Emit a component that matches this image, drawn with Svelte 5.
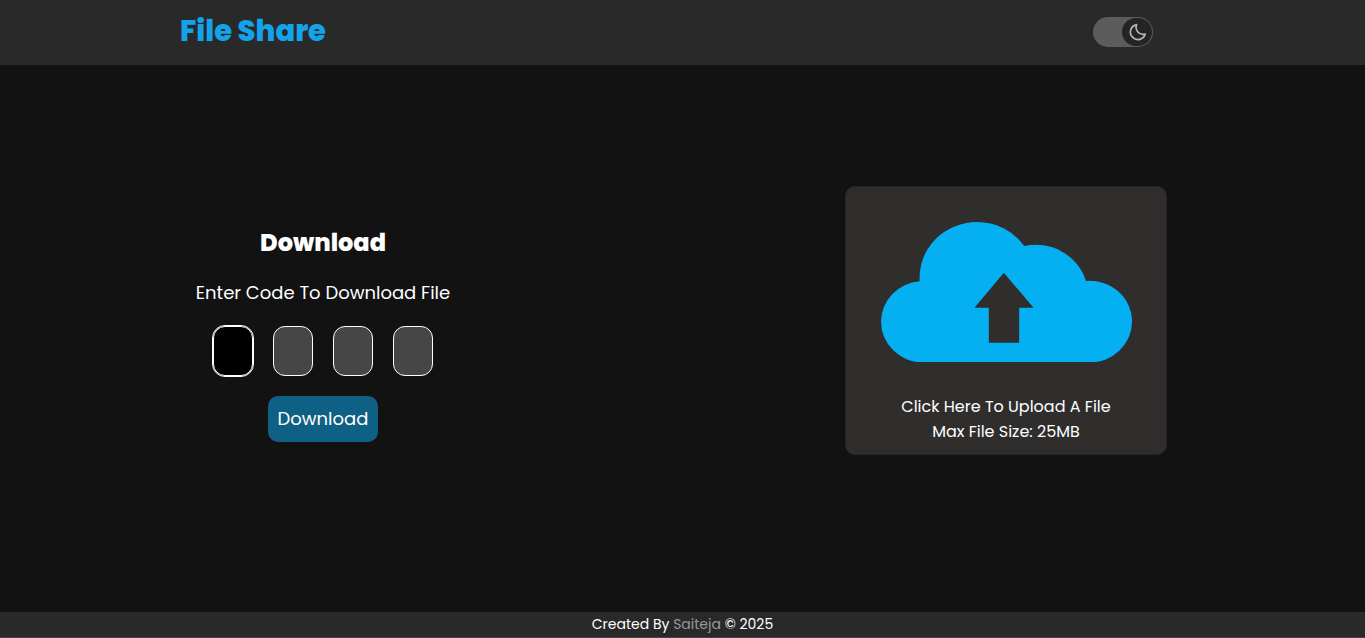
<script>
  let code = $state(['', '', '', '']);
  let dark = $state(true);
</script>

<div class="page">
  <header>
    <h1>File Share</h1>
    <label class="switch">
      <input type="checkbox" bind:checked={dark} aria-label="Dark mode" />
      <span class="knob">
        <svg viewBox="0 0 24 24" width="20" height="20" aria-hidden="true">
          <path d="M11.500 3.200C9.300 8.900 13.600 16.500 21.800 14.600C19.800 20.600 13.200 22.800 8.200 19.500C1.500 15 3.200 5.200 11.500 3.200Z" />
        </svg>
      </span>
    </label>
  </header>

  <main>
    <form class="download" onsubmit={(e) => e.preventDefault()}>
      <h2>Download</h2>
      <p id="hint">Enter Code To Download File</p>
      <div class="code" role="group" aria-labelledby="hint">
        {#each code as _, i}
          <input class:active={i === 0} type="text" inputmode="numeric" maxlength="1" aria-label={`Digit ${i + 1}`} bind:value={code[i]} />
        {/each}
      </div>
      <button class="submit" type="submit">Download</button>
    </form>

    <button class="upload" type="button">
      <svg viewBox="123 124 752 422" aria-hidden="true">
        <path fill-rule="evenodd" d="M250 545A127 122 0 0 1 123 423A127 122 0 0 1 239 301.500A172 166 0 0 1 410 124A172 166 0 0 1 552 196A157 153 0 0 1 737 300.500A127 122 0 0 1 875 423A127 122 0 0 1 748 545ZM491 276L403 381H446V486H537V381H580Z" />
      </svg>
      <span>Click Here To Upload A File</span>
      <span>Max File Size: 25MB</span>
    </button>
  </main>

  <footer>Created By <a href="#saiteja">Saiteja</a> © 2025</footer>
</div>

<style>
  :global(body) {
    margin: 0;
    background: #121212;
  }
  .page {
    min-height: 100vh;
    display: flex;
    flex-direction: column;
    color: #fff;
    font-family: Poppins, Inter, sans-serif;
    box-sizing: border-box;
    border-bottom: 1px solid #444;
  }
  header {
    display: flex;
    align-items: center;
    justify-content: space-between;
    height: 65px;
    padding: 0 212px 4px 180px;
    box-sizing: border-box;
    background: #292929;
  }
  h1 {
    margin: 0;
    font-size: 29px;
    line-height: 40px;
    font-weight: 800;
    color: #12a3eb;
  }
  .switch {
    position: relative;
    display: flex;
    justify-content: flex-end;
    align-items: center;
    width: 60px;
    height: 30px;
    margin-top: 3px;
    padding: 1px;
    box-sizing: border-box;
    border-radius: 15px;
    background: #5c5c5c;
  }
  .switch input {
    position: absolute;
    inset: 0;
    margin: 0;
    opacity: 0;
  }
  .knob {
    display: flex;
    align-items: center;
    justify-content: center;
    width: 30px;
    height: 28px;
    border-radius: 14px;
    background: #242424;
  }
  .knob path {
    fill: none;
    stroke: #b5b5b5;
    stroke-width: 2;
    stroke-linejoin: round;
  }
  main {
    flex: 1;
    display: flex;
    align-items: center;
    justify-content: space-around;
    padding-bottom: 36px;
  }
  .download {
    display: flex;
    flex-direction: column;
    align-items: center;
    width: 249px;
    padding: 26px 0 1px;
  }
  h2 {
    margin: 0;
    font-size: 24px;
    line-height: 36px;
    font-weight: 800;
  }
  p {
    margin: 18px 0 19px;
    font-size: 18px;
    line-height: 28px;
    white-space: nowrap;
  }
  .code {
    display: flex;
    gap: 20px;
    margin-bottom: 20px;
  }
  .code input {
    width: 40px;
    height: 50px;
    padding: 0;
    box-sizing: border-box;
    border: 1px solid #fff;
    border-radius: 12px;
    background: #464646;
    color: #fff;
    font: inherit;
    text-align: center;
  }
  .code .active {
    background: #000;
    outline: 1px solid #fff;
  }
  button {
    border: 0;
    color: inherit;
    font: inherit;
    cursor: pointer;
  }
  .submit {
    padding: 9px 10px;
    border-radius: 10px;
    background: #0f6085;
    font-size: 18px;
    line-height: 28px;
  }
  .upload {
    display: flex;
    flex-direction: column;
    align-items: center;
    width: 322px;
    padding: 35px 34px 10px 35px;
    box-sizing: border-box;
    border: 1px solid #262524;
    border-radius: 10px;
    background: #302e2d;
    font-size: 16px;
    line-height: 25px;
  }
  .upload svg {
    width: 100%;
    margin-bottom: 32px;
    fill: #04aff2;
  }
  footer {
    background: #292929;
    text-align: center;
    font-size: 14px;
    line-height: 25px;
  }
  a {
    color: #999;
    text-decoration: none;
  }
</style>
